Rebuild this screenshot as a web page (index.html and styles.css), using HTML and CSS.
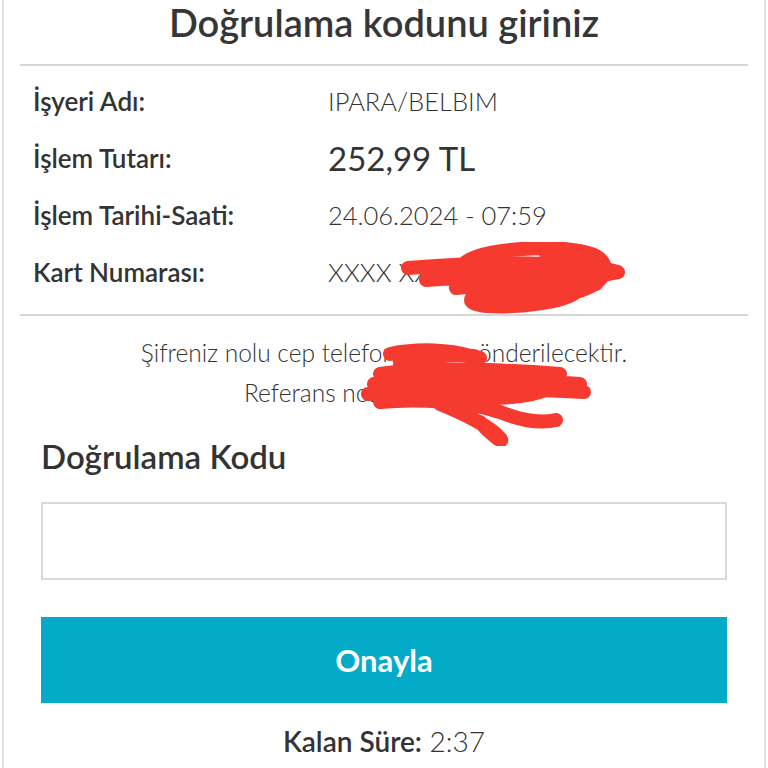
FILE: index.html
```html
<!DOCTYPE html>
<html lang="tr">
<head>
  <meta charset="UTF-8">
  <meta name="viewport" content="width=device-width, initial-scale=1.0">
  <title>Doğrulama</title>
  <link rel="stylesheet" href="styles.css">
</head>
<body>
  <div class="panel">
    <h1 class="title">Doğrulama kodunu giriniz</h1>
    <div class="details">
      <div class="row">
        <span class="label">İşyeri Adı:</span>
        <span class="value">IPARA/BELBIM</span>
      </div>
      <div class="row">
        <span class="label">İşlem Tutarı:</span>
        <span class="value amount">252,99 TL</span>
      </div>
      <div class="row">
        <span class="label">İşlem Tarihi-Saati:</span>
        <span class="value">24.06.2024 - 07:59</span>
      </div>
      <div class="row">
        <span class="label">Kart Numarası:</span>
        <span class="value">XXXX XXXX XXXX 1234</span>
      </div>
      <svg class="scribble scribble-card" width="230" height="72" viewBox="0 0 230 72">
        <path d="M12 26 C60 22 110 20 150 22 M40 30 C90 26 150 24 200 27 M30 38 C80 34 150 34 216 30 M60 46 C100 42 160 40 200 42 M80 54 C110 50 150 50 170 52" />
        <path d="M70 20 C90 4 180 2 200 14 C214 22 214 40 180 50 C170 60 120 66 90 64 C70 62 70 54 90 52" />
        <path d="M150 12 L222 30 L190 36" />
      </svg>
    </div>
    <div class="info">
      <p>Şifreniz nolu cep telefonunuza gönderilecektir.</p>
      <p>Referans no: 0000000000</p>
      <svg class="scribble scribble-ref" width="232" height="104" viewBox="0 0 232 104">
        <path d="M14 42 C60 36 130 36 220 42 M8 52 C70 46 150 46 224 50 M20 32 C60 26 120 26 200 32 M40 22 C70 14 100 10 120 16 M30 12 C60 6 90 8 110 14" />
        <path d="M20 60 C60 56 110 60 140 70 C160 78 180 82 196 78 M80 62 C100 70 130 84 140 96 C146 104 130 92 120 80" />
        <path d="M100 44 C130 40 170 42 190 46 C170 56 130 58 100 54 Z" />
      </svg>
    </div>
    <div class="code">
      <h2 class="code-title">Doğrulama Kodu</h2>
      <input class="code-input" type="text">
      <button class="confirm">Onayla</button>
      <p class="timer"><strong>Kalan Süre:</strong> 2:37</p>
    </div>
  </div>
</body>
</html>
```

FILE: styles.css
```css
body {
  margin: 0;
  background: #fff;
  font-family: Lato, "Open Sans", sans-serif;
  color: #333;
}
.panel {
  min-height: 768px;
  margin: 0 2px;
  border-left: 2px solid #e2e2e2;
  border-right: 2px solid #e2e2e2;
  box-sizing: border-box;
  padding: 0 16px;
}
.title {
  margin: 0;
  padding: 0 0 20px;
  height: 44px;
  line-height: 44px;
  text-align: center;
  font-size: 38px;
  font-weight: 600;
  color: #363636;
  border-bottom: 2px solid #d6d6d6;
}
.details {
  position: relative;
  padding: 6px 0 14px 13px;
  border-bottom: 2px solid #d6d6d6;
}
.row {
  display: flex;
  align-items: center;
  height: 57px;
}
.label {
  width: 295px;
  font-size: 26px;
  font-weight: 600;
}
.value {
  font-size: 25.5px;
  font-weight: 300;
}
.amount {
  font-size: 33px;
  font-weight: 400;
}
.scribble {
  position: absolute;
  fill: none;
  stroke: #f63a2f;
  stroke-width: 14;
  stroke-linecap: round;
  stroke-linejoin: round;
}
.scribble-card {
  left: 376px;
  top: 176px;
}
.info {
  position: relative;
  padding-top: 17px;
  text-align: center;
  font-size: 24.5px;
  font-weight: 300;
}
.info p {
  margin: 0;
  line-height: 40px;
}
.scribble-ref {
  left: 340px;
  top: 26px;
}
.code {
  padding: 25px 21px 0;
}
.code-title {
  margin: 0 0 28px;
  font-size: 33px;
  font-weight: 600;
  line-height: 36px;
}
.code-input {
  display: block;
  width: 100%;
  height: 78px;
  box-sizing: border-box;
  border: 2px solid #d9d9d9;
  background: #fff;
}
.confirm {
  display: block;
  width: 100%;
  height: 86px;
  margin-top: 37px;
  border: none;
  background: #04abc9;
  color: #fff;
  font-family: Lato, sans-serif;
  font-size: 31px;
  font-weight: 700;
}
.timer {
  margin: 21px 0 0;
  text-align: center;
  font-size: 28px;
  font-weight: 300;
}
.timer strong {
  font-weight: 600;
}
```
